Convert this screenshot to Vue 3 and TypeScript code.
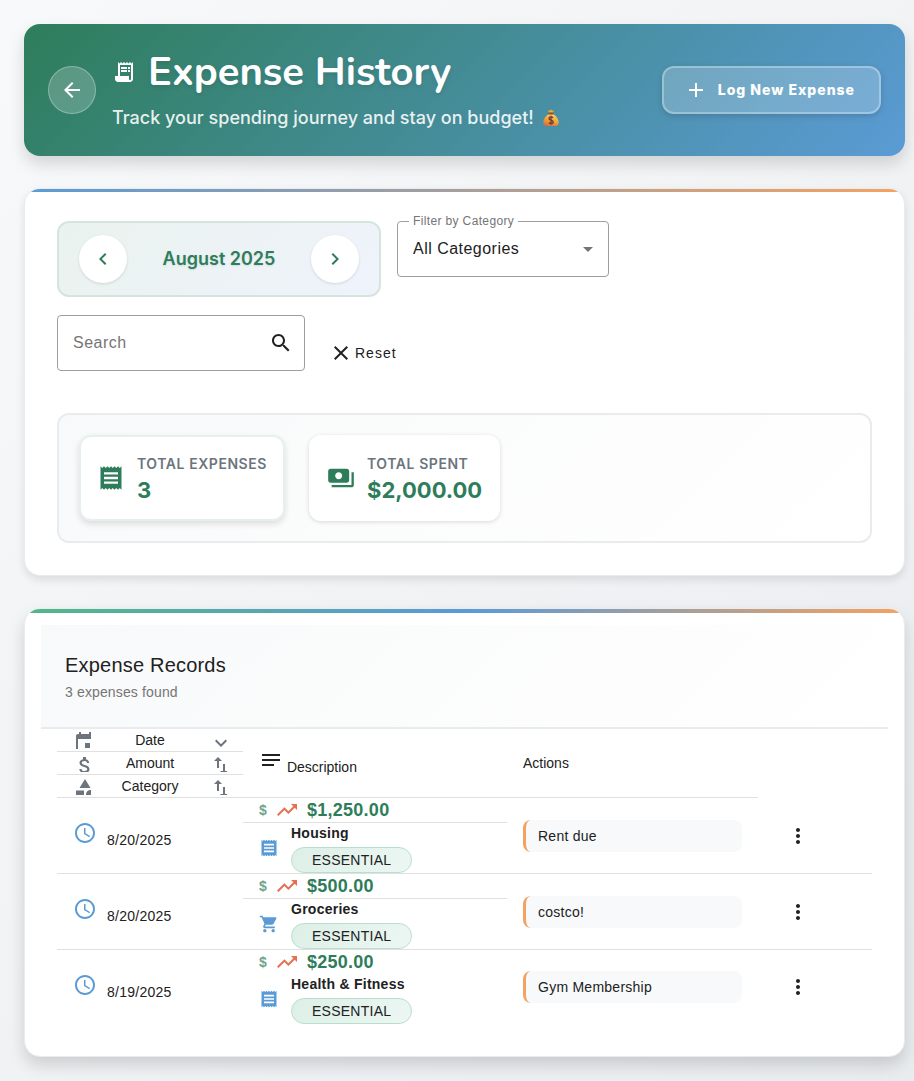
<script setup lang="ts">
import { ref } from 'vue'

interface Expense {
  date: string
  amount: string
  category: string
  icon: string
  necessity: string
  description: string
}

const icons: Record<string, string> = {
  receiptLong:
    'M19.5 3.5L18 2l-1.5 1.5L15 2l-1.5 1.5L12 2l-1.5 1.5L9 2 7.5 3.5 6 2v14H3v3c0 1.66 1.34 3 3 3h12c1.66 0 3-1.34 3-3V2l-1.5 1.5zM19 19c0 .55-.45 1-1 1s-1-.45-1-1v-3H8V5h11v14zM9 7h6v2H9zM16 7h2v2h-2zM9 10h6v2H9zM16 10h2v2h-2z',
  receipt:
    'M18 17H6v-2h12v2zm0-4H6v-2h12v2zm0-4H6V7h12v2zM3 22l1.5-1.5L6 22l1.5-1.5L9 22l1.5-1.5L12 22l1.5-1.5L15 22l1.5-1.5L18 22l1.5-1.5L21 22V2l-1.5 1.5L18 2l-1.5 1.5L15 2l-1.5 1.5L12 2l-1.5 1.5L9 2 7.5 3.5 6 2 4.5 3.5 3 2v20z',
  payments:
    'M19 14V6c0-1.1-.9-2-2-2H3c-1.1 0-2 .9-2 2v8c0 1.1.9 2 2 2h14c1.1 0 2-.9 2-2zm-9-1c-1.66 0-3-1.34-3-3s1.34-3 3-3 3 1.34 3 3-1.34 3-3 3zm13-6v11c0 1.1-.9 2-2 2H4v-2h17V7h2z',
  cart:
    'M7 18c-1.1 0-1.99.9-1.99 2S5.9 22 7 22s2-.9 2-2-.9-2-2-2zM1 2v2h2l3.6 7.59-1.35 2.45c-.16.28-.25.61-.25.96 0 1.1.9 2 2 2h12v-2H7.42c-.14 0-.25-.11-.25-.25l.03-.12.9-1.63h7.45c.75 0 1.41-.41 1.75-1.03l3.58-6.49c.08-.14.12-.31.12-.48 0-.55-.45-1-1-1H5.21l-.94-2H1zm16 16c-1.1 0-1.99.9-1.99 2s.89 2 1.99 2 2-.9 2-2-.9-2-2-2z',
  clock:
    'M11.99 2C6.47 2 2 6.48 2 12s4.47 10 9.99 10C17.52 22 22 17.52 22 12S17.52 2 11.99 2zM12 20c-4.42 0-8-3.58-8-8s3.58-8 8-8 8 3.58 8 8-3.58 8-8 8zm.5-13H11v6l5.25 3.15.75-1.23-4.5-2.67z',
  trend: 'M16 6l2.29 2.29-4.88 4.88-4-4L2 16.59 3.41 18l6-6 4 4 6.3-6.29L22 12V6z',
  event:
    'M17 12h-5v5h5v-5zM16 1v2H8V1H6v2H5c-1.11 0-1.99.9-1.99 2L3 19c0 1.1.89 2 2 2h14c1.1 0 2-.9 2-2V5c0-1.1-.9-2-2-2h-1V1h-2zm3 18H5V8h14v11z',
  money:
    'M11.8 10.9c-2.27-.59-3-1.2-3-2.15 0-1.09 1.01-1.85 2.7-1.85 1.78 0 2.44.85 2.5 2.1h2.21c-.07-1.72-1.12-3.3-3.21-3.81V3h-3v2.16c-1.94.42-3.5 1.68-3.5 3.61 0 2.31 1.91 3.46 4.7 4.13 2.5.6 3 1.48 3 2.41 0 .69-.49 1.79-2.7 1.79-2.06 0-2.87-.92-2.98-2.1h-2.2c.12 2.19 1.76 3.42 3.68 3.83V21h3v-2.15c1.95-.37 3.5-1.5 3.5-3.55 0-2.84-2.43-3.81-4.7-4.4z',
  shapes: 'M12 2l-5.5 9h11zM3 13.5h8v8H3zM17.5 13a4.5 4.5 0 1 0 0 9 4.5 4.5 0 0 0 0-9z',
  down: 'M16.59 8.59L12 13.17 7.41 8.59 6 10l6 6 6-6z',
  swap: 'M16 17.01V10h-2v7.01h-3L15 21l4-3.99h-3zM9 3L5 6.99h3V14h2V6.99h3L9 3z',
  notes: 'M3 18h12v-2H3v2zM3 6v2h18V6H3zm0 7h18v-2H3v2z',
  more:
    'M12 8c1.1 0 2-.9 2-2s-.9-2-2-2-2 .9-2 2 .9 2 2 2zm0 2c-1.1 0-2 .9-2 2s.9 2 2 2 2-.9 2-2-.9-2-2-2zm0 6c-1.1 0-2 .9-2 2s.9 2 2 2 2-.9 2-2-.9-2-2-2z',
  search:
    'M15.5 14h-.79l-.28-.27C15.41 12.59 16 11.11 16 9.5 16 5.91 13.09 3 9.5 3S3 5.91 3 9.5 5.91 16 9.5 16c1.61 0 3.09-.59 4.23-1.57l.27.28v.79l5 4.99L20.49 19l-4.99-5zm-6 0C7.01 14 5 11.99 5 9.5S7.01 5 9.5 5 14 7.01 14 9.5 11.99 14 9.5 14z',
  back: 'M20 11H7.83l5.59-5.59L12 4l-8 8 8 8 1.41-1.41L7.83 13H20v-2z',
  plus: 'M19 13h-6v6h-2v-6H5v-2h6V5h2v6h6v2z',
  close: 'M19 6.41L17.59 5 12 10.59 6.41 5 5 6.41 10.59 12 5 17.59 6.41 19 12 13.41 17.59 19 19 17.59 13.41 12z',
  left: 'M15.41 7.41L14 6l-6 6 6 6 1.41-1.41L10.83 12z',
  right: 'M10 6L8.59 7.41 13.17 12l-4.58 4.59L10 18l6-6z',
}

const sortHeaders = [
  { label: 'Date', icon: 'event', sort: 'down' },
  { label: 'Amount', icon: 'money', sort: 'swap' },
  { label: 'Category', icon: 'shapes', sort: 'swap' },
]

const months = ['January', 'February', 'March', 'April', 'May', 'June', 'July', 'August', 'September', 'October', 'November', 'December']
const monthIndex = ref(2025 * 12 + 7)
const category = ref('All Categories')
const query = ref('')

function monthLabel(index: number): string {
  return `${months[index % 12]} ${Math.floor(index / 12)}`
}

function reset(): void {
  category.value = 'All Categories'
  query.value = ''
}

const expenses: Expense[] = [
  { date: '8/20/2025', amount: '$1,250.00', category: 'Housing', icon: 'receipt', necessity: 'ESSENTIAL', description: 'Rent due' },
  { date: '8/20/2025', amount: '$500.00', category: 'Groceries', icon: 'cart', necessity: 'ESSENTIAL', description: 'costco!' },
  { date: '8/19/2025', amount: '$250.00', category: 'Health & Fitness', icon: 'receipt', necessity: 'ESSENTIAL', description: 'Gym Membership' },
]
</script>

<template>
  <main class="page">
    <header class="hero">
      <button class="back" type="button" aria-label="Back">
        <svg class="i24" viewBox="0 0 24 24"><path :d="icons.back" /></svg>
      </button>
      <div class="hero-text">
        <h1><svg class="i24" viewBox="0 0 24 24"><path :d="icons.receiptLong" /></svg>Expense History</h1>
        <p>
          Track your spending journey and stay on budget!
          <svg class="bag" viewBox="0 0 18 18" role="img" aria-label="Money bag">
            <defs>
              <linearGradient id="bagFill" x1="0.7" y1="0" x2="0.3" y2="1">
                <stop offset="0" stop-color="#fbd65c" />
                <stop offset="0.55" stop-color="#eda23c" />
                <stop offset="1" stop-color="#dc6a3c" />
              </linearGradient>
            </defs>
            <path d="M6 1.2 7.8 1.8 9 .6l1.3 1.2L12 1.2 10.9 4H7.1z" fill="#f0a93c" />
            <path d="M6.8 5h4.4c2.6 1.8 5.5 5 5.5 8.2 0 2.6-1.7 3.9-4.2 3.9h-7c-2.5 0-4.2-1.3-4.2-3.9C1.300 10 4.200 6.800 6.800 5z" fill="url(#bagFill)" />
            <rect x="6.4" y="3.6" width="5.2" height="1.8" rx=".9" fill="#8a4c32" />
            <path d="M11 8.800c-.5-.7-1.200-.9-2-.9-1.100 0-2 .6-2 1.600 0 2.200 4.200 1.200 4.200 3.400 0 1-.9 1.700-2.200 1.700-1 0-1.800-.4-2.200-1.100M9 6.800v9" fill="none" stroke="#6f3c3a" stroke-width="1.3" />
          </svg>
        </p>
      </div>
      <button class="log" type="button">
        <svg class="i24" viewBox="0 0 24 24"><path :d="icons.plus" /></svg>Log New Expense
      </button>
    </header>

    <section class="card filters-card">
      <div class="filters">
        <div class="month">
          <button type="button" aria-label="Previous month" @click="monthIndex--">
            <svg class="i24" viewBox="0 0 24 24"><path :d="icons.left" /></svg>
          </button>
          <span>{{ monthLabel(monthIndex) }}</span>
          <button type="button" aria-label="Next month" @click="monthIndex++">
            <svg class="i24" viewBox="0 0 24 24"><path :d="icons.right" /></svg>
          </button>
        </div>
        <div class="field category">
          <label for="category">Filter by Category</label>
          <select id="category" v-model="category">
            <option>All Categories</option>
            <option>Housing</option>
            <option>Groceries</option>
            <option>Health &amp; Fitness</option>
          </select>
          <span class="caret"></span>
        </div>
        <div class="field search">
          <input v-model="query" type="text" placeholder="Search" aria-label="Search" />
          <svg class="i24" viewBox="0 0 24 24"><path :d="icons.search" /></svg>
        </div>
        <button class="reset" type="button" @click="reset">
          <svg class="i24" viewBox="0 0 24 24"><path :d="icons.close" /></svg>Reset
        </button>
      </div>
      <div class="stats">
        <div class="stat raised">
          <svg class="i28" viewBox="0 0 24 24"><path :d="icons.receipt" /></svg>
          <div><span class="stat-label">TOTAL EXPENSES</span><strong>3</strong></div>
        </div>
        <div class="stat">
          <svg class="i28" viewBox="0 0 24 24"><path :d="icons.payments" /></svg>
          <div><span class="stat-label">TOTAL SPENT</span><strong>$2,000.00</strong></div>
        </div>
      </div>
    </section>

    <section class="card records">
      <div class="records-head">
        <h2>Expense Records</h2>
        <p>3 expenses found</p>
      </div>
      <div class="table-wrap">
        <table>
          <colgroup><col class="c-date" /><col class="c-info" /><col /><col class="c-menu" /></colgroup>
          <thead>
            <tr v-for="(h, n) in sortHeaders" :key="h.label">
              <th scope="col">
                <div class="sort">
                  <svg class="i18" viewBox="0 0 18 18"><path :d="icons[h.icon]" /></svg>
                  {{ h.label }}
                  <svg class="i18" viewBox="0 0 18 18"><path :d="icons[h.sort]" /></svg>
                </div>
              </th>
              <template v-if="n === 0">
                <th class="wide" scope="col" rowspan="3">
                  <svg class="i24" viewBox="0 0 24 24"><path :d="icons.notes" /></svg> Description
                </th>
                <th class="wide" scope="col" rowspan="3">Actions</th>
              </template>
            </tr>
          </thead>
          <tbody v-for="(e, n) in expenses" :key="n">
            <tr>
              <td rowspan="2" class="date">
                <svg class="i24" viewBox="0 0 24 24"><path :d="icons.clock" /></svg>{{ e.date }}
              </td>
              <td>
                <div class="amount">
                  <span class="sign">$</span>
                  <svg class="i24" viewBox="0 0 24 24"><path :d="icons.trend" /></svg>
                  <strong>{{ e.amount }}</strong>
                </div>
              </td>
              <td rowspan="2"><div class="note">{{ e.description }}</div></td>
              <td rowspan="2">
                <button class="menu" type="button" :aria-label="'Actions for ' + e.description">
                  <svg class="i24" viewBox="0 0 24 24"><path :d="icons.more" /></svg>
                </button>
              </td>
            </tr>
            <tr>
              <td>
                <div class="category-cell">
                  <svg class="i20" viewBox="0 0 24 24"><path :d="icons[e.icon]" /></svg>
                  <div><strong>{{ e.category }}</strong><span class="pill">{{ e.necessity }}</span></div>
                </div>
              </td>
            </tr>
          </tbody>
        </table>
      </div>
    </section>
  </main>
</template>

<style>
body {
  margin: 0;
}
</style>

<style scoped>
* {
  box-sizing: border-box;
}
.page {
  min-height: 100vh;
  padding: 24px 9px 24px 24px;
  display: flex;
  flex-direction: column;
  gap: 32px;
  background: linear-gradient(135deg, #f8f9fa 0%, #e9ecef 100%);
  font-family: 'Liberation Sans', Arial, sans-serif;
  font-size: 14px;
  color: #212121;
}
h1,
h2,
p {
  margin: 0;
}
button {
  padding: 0;
  border: 0;
  background: none;
  color: inherit;
  font: inherit;
  cursor: pointer;
}
svg {
  fill: currentColor;
  flex: none;
}
.i18 { width: 18px; height: 18px; }
.i20 { width: 20px; height: 20px; }
.i24 { width: 24px; height: 24px; }
.i28 { width: 28px; height: 28px; }

.hero {
  display: flex;
  align-items: center;
  gap: 16px;
  padding: 24px;
  border-radius: 16px;
  background: linear-gradient(135deg, #2e7d5a 0%, #5b9bd5 100%);
  box-shadow: 0 8px 16px rgba(0, 0, 0, 0.14);
  color: #fff;
}
.back {
  display: grid;
  place-items: center;
  width: 48px;
  height: 48px;
  border: 1px solid rgba(255, 255, 255, 0.3);
  border-radius: 50%;
  background: rgba(255, 255, 255, 0.2);
}
.hero-text {
  flex: 1;
}
h1 {
  display: flex;
  align-items: center;
  gap: 12px;
  font: 700 40px/48px Nunito, Lato, sans-serif;
  text-shadow: 0 2px 4px rgba(0, 0, 0, 0.1);
}
.hero-text p {
  display: flex;
  align-items: center;
  gap: 8px;
  margin-top: 8px;
  font: 500 18px/28px Inter, sans-serif;
  color: rgba(255, 255, 255, 0.9);
}
.bag {
  width: 18px;
  height: 18px;
}
.log {
  display: flex;
  align-items: center;
  gap: 10px;
  height: 48px;
  padding: 0 24px 0 20px;
  border: 2px solid rgba(255, 255, 255, 0.3);
  border-radius: 12px;
  background: rgba(255, 255, 255, 0.2);
  box-shadow: 0 2px 6px rgba(0, 0, 0, 0.15);
  font: 800 14px/20px Inter, sans-serif;
  letter-spacing: 1px;
}

.card {
  position: relative;
  overflow: hidden;
  border: 1px solid #e9ecef;
  border-radius: 16px;
  background: #fff;
}
.card::before {
  content: '';
  position: absolute;
  top: 0;
  left: 0;
  right: 0;
}
.filters-card {
  padding: 32px;
  box-shadow: 0 4px 8px rgba(0, 0, 0, 0.1);
}
.filters-card::before {
  height: 3px;
  background: linear-gradient(90deg, #5b9bd5, #f4a261);
}
.filters {
  display: flex;
  flex-wrap: wrap;
  align-items: flex-start;
  gap: 18px 16px;
}
.month {
  display: flex;
  align-items: center;
  padding: 12px 20px;
  border: 2px solid #d5e5de;
  border-radius: 12px;
  background: linear-gradient(135deg, #eaf2ee, #eff3fc);
  color: #2e7d5a;
}
.month button {
  display: grid;
  place-items: center;
  width: 48px;
  height: 48px;
  border-radius: 50%;
  background: #fff;
  box-shadow: 0 1px 3px rgba(0, 0, 0, 0.12);
}
.month span {
  width: 184px;
  text-align: center;
  font: 600 18px/24px Inter, sans-serif;
  text-shadow: 0 1px 2px rgba(0, 0, 0, 0.1);
}
.field {
  position: relative;
  height: 56px;
  display: flex;
  align-items: center;
  border: 1px solid #9e9e9e;
  border-radius: 4px;
}
.field select,
.field input {
  width: 100%;
  height: 100%;
  padding: 0 15px;
  border: 0;
  outline: 0;
  appearance: none;
  background: transparent;
  color: #212121;
  font: 16px/24px 'Liberation Sans', Arial, sans-serif;
  letter-spacing: 0.03em;
}
.field input::placeholder {
  color: #757575;
  opacity: 1;
}
.category {
  width: 212px;
}
.category label {
  position: absolute;
  top: -9px;
  left: 11px;
  padding: 0 4px;
  background: #fff;
  color: #757575;
  font-size: 12px;
  line-height: 16px;
  letter-spacing: 0.03em;
}
.caret {
  position: absolute;
  right: 15px;
  border: 5px solid transparent;
  border-top-color: #757575;
  border-bottom: 0;
  pointer-events: none;
}
.search {
  width: 248px;
  padding-right: 11px;
}
.reset {
  display: flex;
  align-items: center;
  gap: 2px;
  height: 36px;
  padding: 0 8px;
  align-self: flex-end;
  letter-spacing: 1px;
}
.stats {
  display: flex;
  gap: 24px;
  margin-top: 42px;
  padding: 20px;
  border: 2px solid #e9ecef;
  border-radius: 12px;
  background: linear-gradient(135deg, #f8f9fa, #fff);
}
.stat {
  display: flex;
  align-items: center;
  gap: 12px;
  padding: 15px 16px;
  border: 2px solid transparent;
  border-radius: 12px;
  background: #fff;
  background-clip: border-box;
  box-shadow: 0 1px 4px rgba(0, 0, 0, 0.14);
  color: #2e7d5a;
}
.stat.raised {
  border-color: #e6f1ed;
  box-shadow: 0 3px 6px rgba(0, 0, 0, 0.12);
}
.stat-label {
  display: block;
  color: #6c757d;
  font: 600 14px/24px Inter, sans-serif;
  letter-spacing: 0.04em;
}
.stat strong {
  display: block;
  font: 700 22px/28px Inter, sans-serif;
}

.records {
  padding: 16px;
  box-shadow: 0 8px 16px rgba(0, 0, 0, 0.15);
}
.records::before {
  height: 4px;
  background: linear-gradient(90deg, #52b788, #5b9bd5, #f4a261);
}
.records-head {
  padding: 24px;
  border-bottom: 2px solid #e9ecef;
  background: linear-gradient(135deg, #f8f9fa, #fff);
}
h2 {
  font-size: 20px;
  line-height: 32px;
  font-weight: 400;
  letter-spacing: 0.01em;
}
.records-head p {
  line-height: 22px;
  color: #757575;
  letter-spacing: 0.01em;
}
.table-wrap {
  padding: 0 16px 16px;
}
table {
  width: 100%;
  table-layout: fixed;
  border-collapse: separate;
  border-spacing: 0;
}
.c-date { width: 186px; }
.c-info { width: 264px; }
.c-menu { width: 114px; }
th,
td {
  padding: 0 16px;
  border-bottom: 1px solid #e0e0e0;
  text-align: left;
  font-weight: 400;
}
th.wide {
  line-height: 24px;
}
td {
  line-height: 20px;
  letter-spacing: 0.018em;
}
tbody:last-child td {
  border-bottom: 0;
}
.sort {
  display: flex;
  align-items: center;
  justify-content: space-between;
  height: 22px;
}
.sort svg {
  color: #6c757d;
}
.date svg {
  margin-right: 10px;
  color: #5b9bd5;
}
.amount {
  display: flex;
  align-items: center;
  gap: 8px;
  height: 24px;
  color: #2e7d5a;
}
.amount svg {
  color: #e76f51;
}
.amount strong {
  font-size: 18px;
}
.sign {
  font-weight: 700;
  opacity: 0.7;
}
.category-cell {
  display: flex;
  align-items: center;
  gap: 12px;
}
.category-cell svg {
  color: #5b9bd5;
}
.category-cell strong {
  display: block;
}
.pill {
  display: block;
  width: fit-content;
  margin-top: 4px;
  padding: 0 20px;
  border: 1px solid #b7dfcc;
  border-radius: 13px;
  background: linear-gradient(135deg, #dcefe7, #edf7f3);
  line-height: 24px;
}
.note {
  padding: 6px 12px;
  border-left: 3px solid #f4a261;
  border-radius: 8px;
  background: #f8f9fa;
}
.menu {
  display: grid;
  place-items: center;
  width: 48px;
  height: 48px;
}
</style>
